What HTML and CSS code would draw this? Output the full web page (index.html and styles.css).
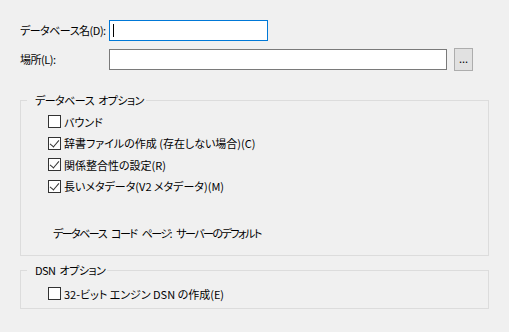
FILE: index.html
```html
<!DOCTYPE html>
<html lang="ja">
<head>
    <meta charset="UTF-8">
    <title>データベースの作成</title>
    <link rel="stylesheet" href="styles.css">
</head>
<body>
    <div class="dialog">
        <div class="fields">
            <label class="field-label">データベース名(D):</label>
            <div class="textbox name-box focused"><span class="caret"></span></div>
            <label class="field-label">場所(L):</label>
            <div class="path-row">
                <div class="textbox path-box"></div>
                <button class="browse">...</button>
            </div>
        </div>

        <fieldset class="group db-options">
            <legend>データベース オプション</legend>
            <div class="group-body">
                <div class="check-row"><span class="check"></span>バウンド</div>
                <div class="check-row"><span class="check on"></span>辞書ファイルの作成 (存在しない場合)(C)</div>
                <div class="check-row"><span class="check on"></span>関係整合性の設定(R)</div>
                <div class="check-row"><span class="check on"></span>長いメタデータ(V2 メタデータ)(M)</div>
                <p class="codepage">データベース コード ページ: サーバーのデフォルト</p>
            </div>
        </fieldset>

        <fieldset class="group dsn-options">
            <legend>DSN オプション</legend>
            <div class="group-body">
                <div class="check-row"><span class="check"></span>32-ビット エンジン DSN の作成(E)</div>
            </div>
        </fieldset>
    </div>
</body>
</html>
```

FILE: styles.css
```css
body {
    margin: 0;
    background: #f0f0f0;
    color: #000;
    font-family: "Noto Sans CJK JP", "Noto Sans", sans-serif;
    font-size: 11px;
    font-feature-settings: "palt";
    white-space: nowrap;
}
.dialog {
    padding: 20px 0 0 20px;
    width: 469px;
}
.fields {
    display: grid;
    grid-template-columns: 89px auto;
    row-gap: 7px;
    align-items: center;
}
.field-label {
    line-height: 21px;
    letter-spacing: -0.5px;
}
.textbox {
    box-sizing: border-box;
    height: 21px;
    background: #fff;
    border: 1px solid #7a7a7a;
    position: relative;
}
.name-box {
    width: 159px;
}
.focused {
    border-color: #0078d7;
}
.caret {
    position: absolute;
    left: 3px;
    top: 3px;
    width: 1px;
    height: 13px;
    background: #000;
}
.path-row {
    display: flex;
    align-items: center;
    gap: 7px;
}
.path-box {
    width: 338px;
}
.browse {
    box-sizing: border-box;
    width: 19px;
    height: 23px;
    padding: 0 0 4px;
    background: #e1e1e1;
    border: 1px solid #adadad;
    font-family: inherit;
    font-size: 11px;
    color: #000;
}
.group {
    margin: 0;
    border: 1px solid #dcdcdc;
    padding: 0 0 0 6px;
}
.group legend {
    position: relative;
    left: 6px;
    margin: 0;
    padding: 0 2px;
    background: #f0f0f0;
    line-height: 16px;
    letter-spacing: -0.5px;
    word-spacing: 2px;
}
.group-body {
    padding-left: 21px;
}
.db-options {
    margin-top: 21px;
    height: 162px;
}
.db-options .group-body {
    padding-top: 3px;
}
.dsn-options {
    margin-top: 6px;
    height: 45px;
}
.dsn-options .group-body {
    padding-top: 5px;
}
.check-row {
    display: flex;
    align-items: center;
    height: 21.5px;
}
.check {
    box-sizing: border-box;
    width: 13px;
    height: 13px;
    margin-right: 3px;
    background: #fff;
    border: 1px solid #333;
    position: relative;
}
.check.on::after {
    content: "";
    position: absolute;
    left: 3px;
    top: 0;
    width: 4px;
    height: 8px;
    border: solid #333;
    border-width: 0 1px 1px 0;
    transform: rotate(40deg);
}
.codepage {
    margin: 28px 0 0 5px;
    letter-spacing: -1.5px;
    word-spacing: 4px;
}
```
